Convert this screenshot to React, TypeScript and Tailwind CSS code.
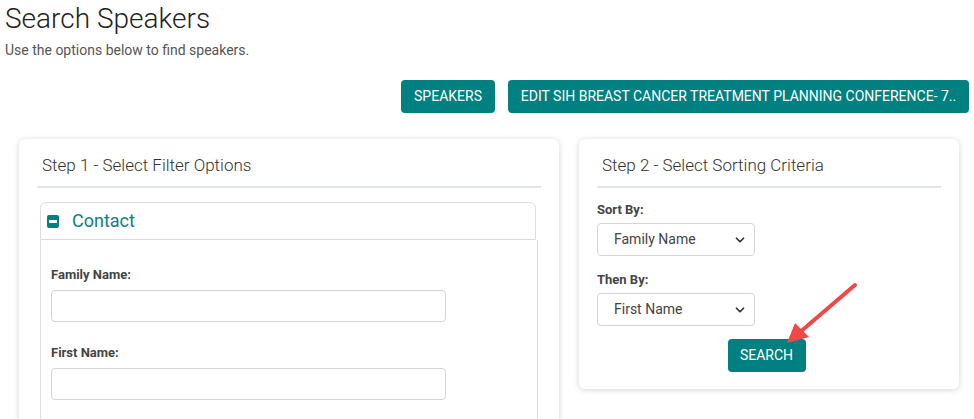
import { ChevronDown } from 'lucide-react';

const teal = 'bg-[#008080]';

function TealButton({ label, className = '' }: { label: string; className?: string }) {
  return (
    <button
      className={`${teal} h-[33px] rounded-[4px] text-white text-[14px] font-normal uppercase ${className}`}
    >
      {label}
    </button>
  );
}

function TextField({ label }: { label: string }) {
  return (
    <div className="flex flex-col">
      <label className="text-[13px] font-bold text-[#444] leading-[16px]">{label}</label>
      <input className="mt-[7px] h-[32px] w-[395px] rounded-[4px] border border-[#d4d4d4] bg-white" />
    </div>
  );
}

function SortSelect({ label, value }: { label: string; value: string }) {
  return (
    <div className="flex flex-col">
      <label className="text-[13px] font-bold text-[#444] leading-[16px]">{label}</label>
      <div className="mt-[5px] flex h-[33px] w-[158px] items-center justify-between rounded-[4px] border border-[#d4d4d4] bg-white pl-[16px] pr-[7px]">
        <span className="text-[14px] text-[#444]">{value}</span>
        <ChevronDown size={14} strokeWidth={3} className="text-[#333]" />
      </div>
    </div>
  );
}

export default function App() {
  return (
    <div className="h-[419px] w-[974px] overflow-hidden bg-white font-['Roboto',sans-serif] text-[#212529]">
      {/* Page header */}
      <div className="pl-[5px] pt-[2px]">
        <h1 className="text-[28px] font-light leading-[34px] text-[#222]">Search Speakers</h1>
        <p className="mt-[5px] text-[14px] leading-[18px] text-[#555]">Use the options below to find speakers.</p>
      </div>

      {/* Action buttons */}
      <div className="mt-[21px] flex justify-end gap-[13px] pr-[5px]">
        <TealButton label="Speakers" className="w-[94px]" />
        <TealButton label="Edit SIH Breast Cancer Treatment Planning Conference- 7.." className="w-[461px]" />
      </div>

      <div className="mt-[26px] flex items-start gap-[20px] pl-[19px]">
        {/* Step 1 */}
        <div className="h-[300px] w-[540px] rounded-[6px] bg-white px-[18px] pt-[16px] shadow-[0_1px_6px_rgba(0,0,0,0.16)]">
          <div className="pl-[5px] text-[17px] font-light leading-[20px] text-[#333]">Step 1 - Select Filter Options</div>
          <div className="mt-[11px] h-[2px] bg-[#e3e6ea]" />

          <div className="ml-[3px] mr-[5px] mt-[14px]">
            <div className="flex h-[38px] items-center gap-[13px] rounded-t-[6px] border border-[#dcdcdc] pl-[6px]">
              <span className="flex h-[13px] w-[12px] items-center justify-center rounded-[2px] bg-[#008080]">
                <span className="h-[3px] w-[8px] bg-white" />
              </span>
              <span className="text-[18px] leading-[22px] text-[#117e84]">Contact</span>
            </div>
            <div className="-mr-[2px] h-[200px] border-x border-[#dcdcdc] pl-[10px] pt-[27px]">
              <div className="flex flex-col gap-[23px]">
                <TextField label="Family Name:" />
                <TextField label="First Name:" />
              </div>
            </div>
          </div>
        </div>

        {/* Step 2 */}
        <div className="relative w-[380px] rounded-[6px] bg-white px-[18px] pb-[17px] pt-[16px] shadow-[0_1px_6px_rgba(0,0,0,0.16)]">
          <div className="pl-[5px] text-[17px] font-light leading-[20px] text-[#333]">Step 2 - Select Sorting Criteria</div>
          <div className="mt-[11px] h-[2px] bg-[#e3e6ea]" />

          <div className="mt-[14px] flex flex-col gap-[16px]">
            <SortSelect label="Sort By:" value="Family Name" />
            <SortSelect label="Then By:" value="First Name" />
          </div>

          <div className="mt-[13px] flex justify-center pr-[5px]">
            <TealButton label="Search" className="w-[78px]" />
          </div>

          {/* pointer arrow */}
          <svg className="pointer-events-none absolute left-[200px] top-[140px]" width="90" height="70" viewBox="0 0 90 70">
            <line x1="76" y1="6" x2="20" y2="54" stroke="#f04848" strokeWidth="4" strokeLinecap="round" />
            <polygon points="8,64 16,44 30,58" fill="#f04848" />
          </svg>
        </div>
      </div>
    </div>
  );
}
